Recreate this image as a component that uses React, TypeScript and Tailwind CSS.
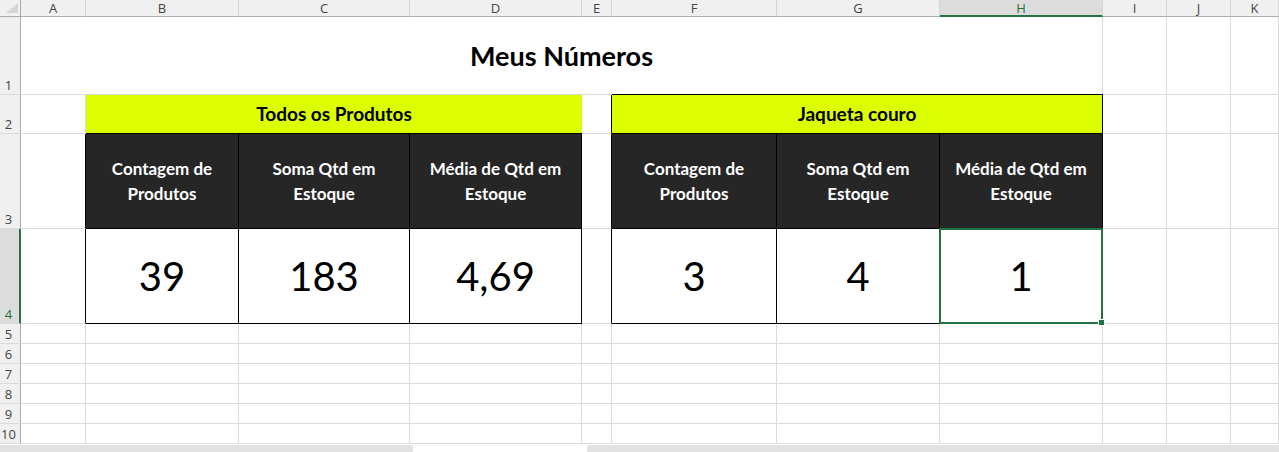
import type { ReactNode } from 'react';
import clsx from 'clsx';

const columns = ['A', 'B', 'C', 'D', 'E', 'F', 'G', 'H', 'I', 'J', 'K'];

const cellFont = { fontFamily: 'Lato, "Open Sans", sans-serif' };
const uiFont = { fontFamily: '"Open Sans", "Noto Sans", sans-serif' };

function ColHead({ label }: { label: string }) {
    const active = label === 'H';
    return (
        <div
            style={uiFont}
            className={clsx(
                'flex items-center justify-center text-[13px] leading-none border-r border-[#d4d4d4]',
                active
                    ? 'bg-[#dcdcdc] text-[#217346] border-b-2 border-b-[#217346] pt-px'
                    : 'bg-[#f0f0f0] text-[#444] border-b border-b-[#ababab]'
            )}
        >
            {label}
        </div>
    );
}

function RowHead({ n }: { n: number }) {
    const active = n === 4;
    return (
        <div
            style={uiFont}
            className={clsx(
                'flex items-end border-b border-[#dadada] text-[13px] leading-none pb-[2px]',
                active
                    ? 'bg-[#dcdcdc] text-[#217346] border-r-2 border-r-[#217346]'
                    : 'bg-[#f0f0f0] text-[#444] border-r border-r-[#ababab]'
            )}
        >
            <span className="w-[17px] text-center">{n}</span>
        </div>
    );
}

function Cell({ className, children }: { className?: string; children?: ReactNode }) {
    return <div className={clsx('border-r border-b border-[#dadada]', className)}>{children}</div>;
}

function DarkHead({ children }: { children: ReactNode }) {
    return (
        <div
            style={cellFont}
            className="flex items-center justify-center text-center bg-[#262626] text-white font-bold text-[17px] leading-[25px] border-r border-b border-black"
        >
            {children}
        </div>
    );
}

function Value({ children, selected }: { children: ReactNode; selected?: boolean }) {
    return (
        <div
            style={cellFont}
            className="relative flex items-center justify-center text-[40px] text-black border-r border-b border-black"
        >
            {children}
            {selected && (
                <div className="absolute -inset-px z-10 border-2 border-[#217346]">
                    <div className="absolute -right-[4px] -bottom-[4px] w-[7px] h-[7px] bg-[#217346] border border-white" />
                </div>
            )}
        </div>
    );
}

export default function App() {
    return (
        <div className="w-[1279px] h-[452px] overflow-hidden bg-white">
            <div className="grid grid-cols-[21px_65px_153px_171px_172px_30px_165px_163px_163px_64px_64px_1fr] grid-rows-[17px_78px_39px_95px_95px_repeat(6,20px)]">
                {/* header row */}
                <div className="bg-[#f0f0f0] border-r border-b border-[#ababab] flex items-end justify-end pr-[2px] pb-[3px]">
                    <svg width="12" height="10" viewBox="0 0 12 10">
                        <polygon points="12,0 12,10 0,10" fill="#d6d6d6" />
                    </svg>
                </div>
                {columns.map((c) => (
                    <ColHead key={c} label={c} />
                ))}

                {/* row 1 */}
                <RowHead n={1} />
                <Cell className="col-span-8 flex items-center justify-center pt-[2px]">
                    <span style={cellFont} className="text-[27px] font-bold text-black">
                        Meus Números
                    </span>
                </Cell>
                <Cell />
                <Cell />
                <Cell />

                {/* row 2 */}
                <RowHead n={2} />
                <Cell />
                <div
                    style={cellFont}
                    className="col-span-3 flex items-center justify-center bg-[#dcff00] border-b border-black text-[19px] font-bold text-black"
                >
                    Todos os Produtos
                </div>
                <Cell className="border-r-black" />
                <div
                    style={cellFont}
                    className="col-span-3 flex items-center justify-center bg-[#dcff00] border-r border-b border-black shadow-[0_-1px_0_#000] text-[19px] font-bold text-black"
                >
                    Jaqueta couro
                </div>
                <Cell />
                <Cell />
                <Cell />

                {/* row 3 */}
                <RowHead n={3} />
                <Cell className="border-r-black" />
                <DarkHead>
                    Contagem de
                    <br />
                    Produtos
                </DarkHead>
                <DarkHead>
                    Soma Qtd em
                    <br />
                    Estoque
                </DarkHead>
                <DarkHead>
                    Média de Qtd em
                    <br />
                    Estoque
                </DarkHead>
                <Cell className="border-r-black" />
                <DarkHead>
                    Contagem de
                    <br />
                    Produtos
                </DarkHead>
                <DarkHead>
                    Soma Qtd em
                    <br />
                    Estoque
                </DarkHead>
                <DarkHead>
                    Média de Qtd em
                    <br />
                    Estoque
                </DarkHead>
                <Cell />
                <Cell />
                <Cell />

                {/* row 4 */}
                <RowHead n={4} />
                <Cell className="border-r-black" />
                <Value>39</Value>
                <Value>183</Value>
                <Value>4,69</Value>
                <Cell className="border-r-black" />
                <Value>3</Value>
                <Value>4</Value>
                <Value selected>1</Value>
                <Cell />
                <Cell />
                <Cell />

                {/* rows 5-10 */}
                {[5, 6, 7, 8, 9, 10].map((n) => (
                    <div key={n} className="contents">
                        <RowHead n={n} />
                        {columns.map((c) => (
                            <Cell key={c} />
                        ))}
                    </div>
                ))}
            </div>
            <div className="flex h-[8px] pt-[1px]">
                <div className="w-[413px] bg-[#e1e1e1] rounded-tr-[3px]" />
                <div className="w-[174px]" />
                <div className="flex-1 bg-[#e1e1e1] rounded-tl-[3px]" />
            </div>
        </div>
    );
}
